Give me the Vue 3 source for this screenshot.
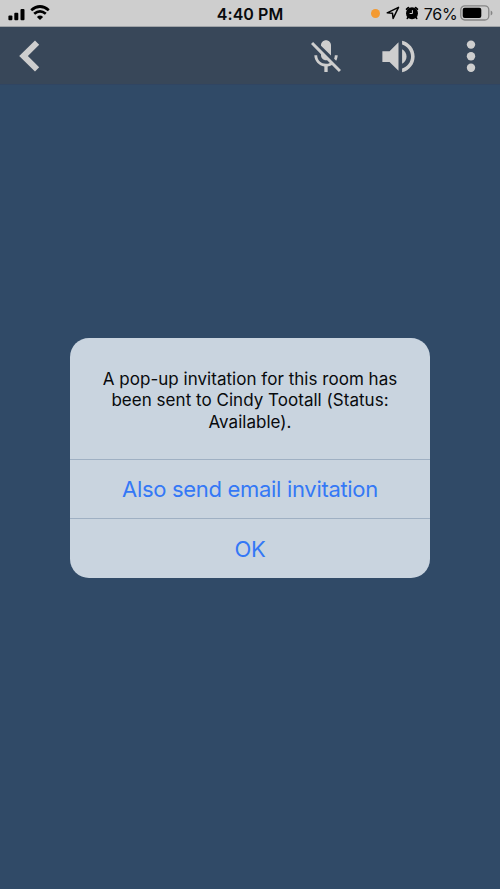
<script setup>
const message = ['A pop-up invitation for this room has', 'been sent to Cindy Tootall (Status:', 'Available).']
</script>

<template>
  <main class="screen">
    <header class="status">
      <div class="side">
        <svg class="signal" width="18" height="14" viewBox="0 0 18 14">
          <rect x="0.4" y="8.4" width="4" height="4.8" rx="1" />
          <rect x="6.3" y="5.8" width="4" height="7.4" rx="1" />
          <rect x="12.5" y="2" width="4" height="11.2" rx="1" />
        </svg>
        <svg class="wifi" width="20" height="16" viewBox="0 0 20 16">
          <path d="M1.2 5.2Q10-2.2 18.8 5.2M4.2 8.8Q10 3.8 15.8 8.8" fill="none" stroke="#000" stroke-width="2.7" />
          <path d="M6.9 11.9Q10 9.3 13.1 11.9L10 15Z" />
        </svg>
      </div>
      <div class="time">4:40 PM</div>
      <div class="side right">
        <i class="dot"></i>
        <svg class="location" width="14" height="14" viewBox="0 0 14 14">
          <path d="M1.2 6.8L12.5 1.3L7.1 12.5L6.5 7.3Z" fill="none" stroke="#000" stroke-width="1.5" stroke-linejoin="round" />
        </svg>
        <svg class="alarm" width="14" height="14" viewBox="0 0 14 14">
          <circle cx="7" cy="7.2" r="6" />
          <path d="M1.6 3.2L3.4 1.6M12.4 3.2L10.6 1.6M3 11.4L2.4 12.4M11 11.4L11.6 12.4" stroke="#000" stroke-width="1.8" stroke-linecap="round" />
          <path d="M7.4 4.2V7.5H4.6" fill="none" stroke="#cecece" stroke-width="1" />
        </svg>
        <span class="percent">76%</span>
        <svg class="battery" width="33" height="16" viewBox="0 0 33 16">
          <rect x="0.8" y="0.8" width="28" height="14.2" rx="4" fill="none" stroke="#858585" stroke-width="1.3" />
          <rect x="2.7" y="2.7" width="18.6" height="10.4" rx="2" />
          <path d="M30.7 5.4Q32.5 6.2 32.5 7.9T30.7 10.4Z" fill="#858585" />
        </svg>
      </div>
    </header>
    <nav class="toolbar">
      <svg class="back" width="22" height="32" viewBox="0 0 22 32">
        <path d="M18.1 2.7L4.5 16L18.1 29.3" fill="none" stroke="#cecece" stroke-width="6" />
      </svg>
      <svg class="mic" width="40" height="40" viewBox="0 0 24 24">
        <path d="M19 11h-1.7c0 .74-.16 1.43-.43 2.05l1.23 1.23c.56-.98.9-2.09.9-3.28zm-4.02.17c0-.06.02-.11.02-.17V5c0-1.66-1.34-3-3-3S9 3.34 9 5v.18l5.98 5.99zM4.27 3L3 4.27l6.01 6.01V11c0 1.66 1.33 3 2.99 3 .22 0 .44-.03.65-.08l1.66 1.66c-.71.33-1.5.52-2.31.52-2.76 0-5.3-2.1-5.3-5.1H5c0 3.41 2.72 6.23 6 6.72V21h2v-3.28c.91-.13 1.77-.45 2.54-.9L19.73 21 21 19.73 4.27 3z" />
      </svg>
      <svg class="volume" width="43" height="43" viewBox="0 0 24 24">
        <path d="M3 9v6h4l5 5V4L7 9H3zm13.5 3c0-1.77-1.02-3.29-2.5-4.03v8.05c1.48-.73 2.5-2.25 2.5-4.02zM14 3.23v2.06c2.89.86 5 3.54 5 6.71s-2.11 5.85-5 6.71v2.06c4.01-.91 7-4.49 7-8.77s-2.99-7.86-7-8.77z" />
      </svg>
      <svg class="more" width="10" height="32" viewBox="0 0 10 32">
        <circle cx="5" cy="4.6" r="4.2" /><circle cx="5" cy="16.2" r="4.2" /><circle cx="5" cy="27.7" r="4.2" />
      </svg>
    </nav>
    <div class="stage">
      <section class="dialog" role="alertdialog">
        <p class="message"><span v-for="line in message" :key="line">{{ line }}</span></p>
        <button class="email">Also send email invitation</button>
        <button class="ok">OK</button>
      </section>
    </div>
  </main>
</template>

<style>
body { margin: 0; }
</style>

<style scoped>
* { box-sizing: border-box; }
svg { display: block; flex: none; }
.screen { width: 500px; height: 889px; display: flex; flex-direction: column; background: #304a67; font-family: Inter, "Liberation Sans", sans-serif; color: #080a0c; overflow: hidden; }
.status { height: 27px; flex: none; display: grid; grid-template-columns: 200px 100px 200px; align-items: center; background: #cecece; border-bottom: 1px solid #a0a4a8; }
.side { display: flex; align-items: center; height: 26px; padding-left: 8px; }
.signal { margin-top: 1px; }
.wifi { margin-left: 4px; }
.right { padding: 0 7px 0 0; justify-content: flex-end; }
.time { text-align: center; font-size: 16px; font-weight: 600; letter-spacing: .05px; white-space: nowrap; padding-top: 1px; }
.dot { width: 9px; height: 9px; border-radius: 50%; background: #f39a32; margin-right: 6px; }
.alarm { margin-left: 5px; }
.percent { font-size: 16px; letter-spacing: -.2px; margin: 1px 2.5px 0 5px; }
.toolbar { height: 58px; flex: none; display: flex; align-items: center; background: #384759; border-bottom: 1px solid #304562; padding: 1px 25px 0 19px; }
.toolbar svg { fill: #cecece; }
.mic { margin: 1.5px 0 0 265.4px; }
.volume { margin-left: 30.6px; }
.more { margin-left: 46px; }
.stage { flex: 1; padding: 253px 70px 0; }
.dialog { height: 240px; border-radius: 19px; overflow: hidden; background: #c9d4df; display: grid; grid-template-rows: 121px 59px 60px; }
.message { margin: 0; padding-top: 30.5px; display: flex; flex-direction: column; align-items: center; font-size: 17px; letter-spacing: .03px; line-height: 21.5px; white-space: nowrap; }
button { font-family: inherit; border: 0; border-top: 1px solid #9fb0c3; background: transparent; padding: 0; color: #3478f6; font-size: 22px; letter-spacing: -.31px; line-height: 28px; }
</style>
